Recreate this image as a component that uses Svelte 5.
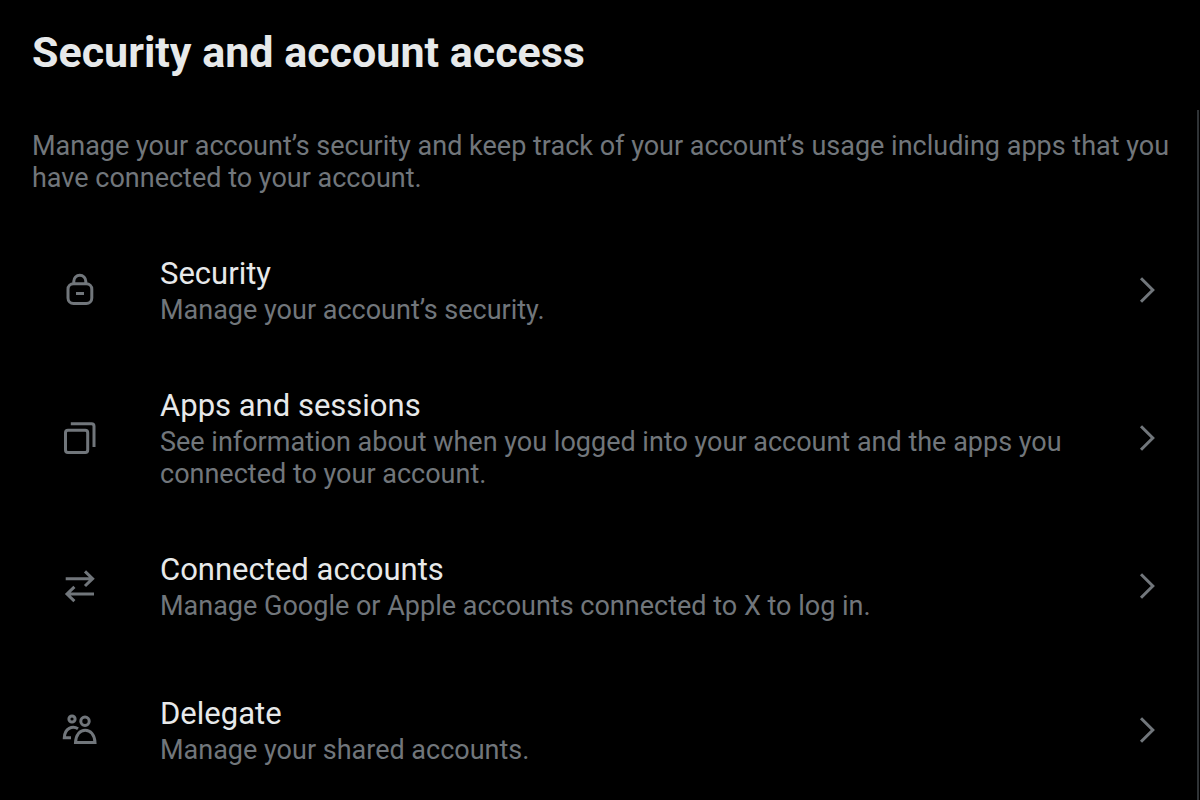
<script lang="ts">
  type Icon = "lock" | "windows" | "arrows" | "people";

  interface Item {
    icon: Icon;
    title: string;
    text: string;
    href: string;
  }

  const items: Item[] = [
    {
      icon: "lock",
      title: "Security",
      text: "Manage your account’s security.",
      href: "#security",
    },
    {
      icon: "windows",
      title: "Apps and sessions",
      text: "See information about when you logged into your account and the apps you connected to your account.",
      href: "#apps-and-sessions",
    },
    {
      icon: "arrows",
      title: "Connected accounts",
      text: "Manage Google or Apple accounts connected to X to log in.",
      href: "#connected-accounts",
    },
    {
      icon: "people",
      title: "Delegate",
      text: "Manage your shared accounts.",
      href: "#delegate",
    },
  ];
</script>

<main class="settings">
  <header class="header">
    <h1>Security and account access</h1>
  </header>

  <section class="panel">
    <p class="intro">
      Manage your account’s security and keep track of your account’s usage including apps that you
      have connected to your account.
    </p>

    <nav aria-label="Security and account access">
      {#each items as item (item.title)}
        <a class="row" href={item.href}>
          <span class="row-icon">
            <svg class="icon" viewBox="0 0 38 38" aria-hidden="true">
              {#if item.icon === "lock"}
                <rect x="7" y="12.8" width="23.8" height="19.8" rx="5.5" />
                <path d="M12.8 12.5V10.2a6 6 0 0 1 12 0v2.3M15 22.5h8" />
              {:else if item.icon === "windows"}
                <rect x="4.5" y="11.2" width="22.2" height="22.2" rx="2.5" />
                <path d="M9.8 4.8h20.7a2.5 2.5 0 0 1 2.5 2.5v20.8" />
              {:else if item.icon === "arrows"}
                <path d="M4.7 11.7h27M24 4.4l7.6 7.3L24 19" />
                <path d="M33 27H6M13.4 19.8L6 27l7.4 7.2" />
              {:else}
                <circle cx="11" cy="8" r="3.1" />
                <circle cx="24" cy="10.3" r="4.2" />
                <path d="M17 17.8C11.5 14 3.6 17.5 3.3 26.7H10" />
                <path d="M14.5 31.6H34C33.6 23.6 29.4 19.2 24.2 19.2S14.9 23.6 14.5 31.6z" />
              {/if}
            </svg>
          </span>

          <span class="row-body">
            <span class="row-title">{item.title}</span>
            <span class="row-text">{item.text}</span>
          </span>

          <svg class="icon" viewBox="0 0 38 38" aria-hidden="true">
            <path d="M10 7.2L21.8 19 10 30.8" />
          </svg>
        </a>
      {/each}
    </nav>
  </section>
</main>

<style>
  :global(body) {
    background: #000;
  }

  .settings {
    display: flex;
    flex-direction: column;
    height: 100vh;
    overflow: hidden;
    font-family: Roboto, "Liberation Sans", sans-serif;
    color: #e7e9ea;
    background: #000;
  }

  .header {
    display: flex;
    flex-shrink: 0;
    padding: 28px 32px 34px;
  }

  h1 {
    margin: 0;
    font-size: 43px;
    line-height: 48px;
    font-weight: 700;
  }

  .panel {
    flex: 1;
    margin-right: 1px;
    border-right: 2px solid #2f3336;
  }

  .intro {
    margin: 0;
    padding: 20px 20px 24px 32px;
    font-size: 27px;
    line-height: 32px;
    color: #71767b;
  }

  .row {
    display: flex;
    align-items: center;
    box-sizing: border-box;
    min-height: 144px;
    padding: 24px 28px 24px 32px;
    color: inherit;
    text-decoration: none;
  }

  .row:hover {
    background: #16181c;
  }

  .row-icon {
    display: flex;
    justify-content: center;
    flex: none;
    width: 96px;
    margin-right: 32px;
  }

  .row-body {
    display: flex;
    flex: 1;
    flex-direction: column;
    padding-right: 24px;
  }

  .row-title {
    font-size: 31px;
    line-height: 40px;
  }

  .row-text {
    font-size: 27px;
    line-height: 32px;
    color: #71767b;
  }

  .icon {
    flex: none;
    width: 38px;
    height: 38px;
    fill: none;
    stroke: #71767b;
    stroke-width: 3;
  }
</style>
